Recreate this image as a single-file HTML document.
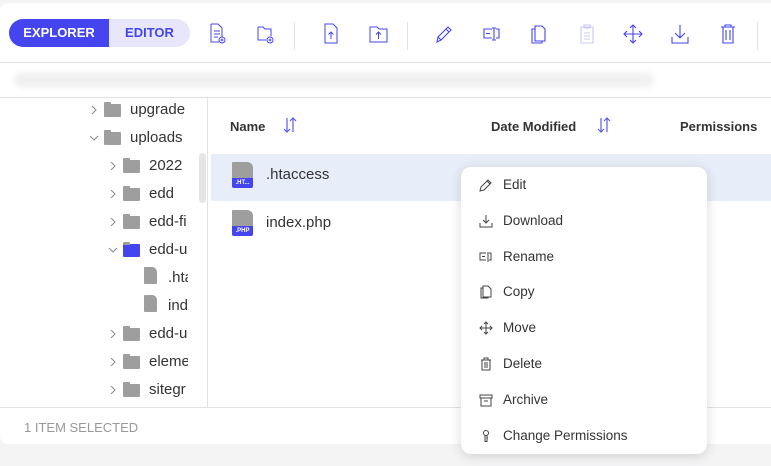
<!DOCTYPE html>
<html><head><style>
*{box-sizing:border-box;margin:0;padding:0}
body{width:771px;height:466px;background:#f4f4f5;font-family:"Liberation Sans",sans-serif;position:relative;overflow:hidden}
.card{position:absolute;left:0;top:3px;width:771px;height:441px;background:#fff;border-radius:8px 0 0 8px}
.tb{position:absolute;left:0;top:0;width:771px;height:60px;border-bottom:1px solid #e2e2e2}
.seg{position:absolute;left:9px;top:16px;width:181px;height:28px;border-radius:14px;background:#e8e6fb;overflow:hidden}
.seg .a{position:absolute;left:0;top:0;width:100px;height:28px;background:#4545ef;color:#fff;font-weight:bold;font-size:13px;line-height:28px;text-align:center}
.seg .b{position:absolute;left:100px;top:0;width:81px;height:28px;color:#4545ef;font-weight:bold;font-size:13px;line-height:28px;text-align:center}
.ic{position:absolute;top:20px}
.sep{position:absolute;top:19px;width:1px;height:28px;background:#e2e2e2}
.bc{position:absolute;left:0;top:61px;width:771px;height:34px;border-bottom:1px solid #e2e2e2}
.blur{position:absolute;left:14px;top:9px;width:640px;height:14px;background:#f0f0f0;border-radius:7px;filter:blur(3px)}
.tree{position:absolute;left:0;top:95px;width:208px;height:309px;border-right:1px solid #e2e2e2;overflow:hidden}
.row{position:absolute;font-size:15px;color:#333;height:20px;line-height:20px;white-space:nowrap}
.fold{position:absolute;width:17px;height:13px;background:#9e9e9e;border-radius:1px}
.fold:before{content:"";position:absolute;left:0;top:-2px;width:7px;height:3px;background:#9e9e9e;border-radius:1px 1px 0 0}
.chev{position:absolute;width:10px;height:10px}
.sb{position:absolute;left:199px;top:55px;width:7px;height:50px;background:#e4e4e4;border-radius:4px}
.hdr{position:absolute;top:116px;font-size:13px;font-weight:bold;color:#333}
.sel{position:absolute;left:211px;top:151px;width:560px;height:47px;background:#e8eef9}
.fname{position:absolute;font-size:15px;color:#333}
.status{position:absolute;left:0;top:404px;width:771px;height:37px;border-top:1px solid #e2e2e2;font-size:13px;color:#999;padding:12px 0 0 24px}
.menu{position:absolute;left:461px;top:167px;width:246px;height:287px;background:#fff;border-radius:10px;box-shadow:0 2px 12px rgba(0,0,0,.15)}
.mi{position:absolute;left:0;font-size:13.5px;color:#333;height:20px;line-height:20px}
.mi svg{position:absolute;left:18px;top:3px}
.mi span{position:absolute;left:42px;white-space:nowrap}
</style></head><body>
<svg width="0" height="0" style="position:absolute"><defs>
<symbol id="cr" viewBox="0 0 10 10"><path d="M3 1l4 4-4 4" fill="none" stroke="#888" stroke-width="1"/></symbol>
<symbol id="cd" viewBox="0 0 10 10"><path d="M1 3l4 4 4-4" fill="none" stroke="#888" stroke-width="1"/></symbol>
<symbol id="srt" viewBox="0 0 16 18"><path d="M5 2v14M2 13l3 3 3-3M11 16V2M8 5l3-3 3 3" fill="none" stroke="#5b5bf0" stroke-width="1.2"/></symbol>
</defs></svg>
<div class="card">
<div class="tb">
 <div class="seg"><div class="a">EXPLORER</div><div class="b">EDITOR</div></div>
 <svg class="ic" style="left:209px" width="18" height="22" viewBox="0 0 18 22" fill="none" stroke="#4545ef" stroke-width="1"><path d="M2 1h7l4 4v9M2 1v18h8"/><path d="M5 8h6M5 11h6M5 14h4"/><circle cx="13" cy="17" r="3"/><path d="M13 15.5v3M11.5 17h3"/></svg>
 <svg class="ic" style="left:256px" width="20" height="22" viewBox="0 0 20 22" fill="none" stroke="#4545ef" stroke-width="1"><path d="M2 4h5l2 2h6v7M2 4v13h8"/><circle cx="14" cy="17" r="3"/><path d="M14 15.5v3M12.5 17h3"/></svg>
 <div class="sep" style="left:294px"></div>
 <svg class="ic" style="left:323px" width="18" height="22" viewBox="0 0 18 22" fill="none" stroke="#4545ef" stroke-width="1"><path d="M2 1h8l4 4v15H2z"/><path d="M8 16v-7M5.5 11.5L8 9l2.5 2.5"/></svg>
 <svg class="ic" style="left:369px" width="20" height="22" viewBox="0 0 20 22" fill="none" stroke="#4545ef" stroke-width="1"><path d="M1 4h7l2 2h8v13H1z"/><path d="M9.5 16v-7M7 11.5L9.5 9l2.5 2.5"/></svg>
 <div class="sep" style="left:407px"></div>
 <svg class="ic" style="left:434px" width="20" height="22" viewBox="0 0 20 22" fill="none" stroke="#4545ef" stroke-width="1.1"><path d="M3 19l1-5L14 4l3 3L7 17z M12 6l3 3 M4 14l3 3"/></svg>
 <svg class="ic" style="left:481px" width="22" height="22" viewBox="0 0 22 22" fill="none" stroke="#4545ef" stroke-width="1.1"><path d="M11 6H3v9h8M15 6h3v9h-3M13 5v12M11 5h4M11 17h4M5 10.5h4"/></svg>
 <svg class="ic" style="left:530px" width="18" height="22" viewBox="0 0 18 22" fill="none" stroke="#4545ef" stroke-width="1.1"><path d="M5 3h7l3 3v12H5z"/><path d="M5 6H2v14h10v-2"/></svg>
 <svg class="ic" style="left:578px" width="18" height="22" viewBox="0 0 18 22" fill="none" stroke="#c8c8f6" stroke-width="1.1"><path d="M3 4h12v16H3zM6 2h6v3H6zM6 10h6M6 13h6M6 16h6"/></svg>
 <svg class="ic" style="left:622px" width="22" height="22" viewBox="0 0 22 22" fill="none" stroke="#4545ef" stroke-width="1.1"><path d="M11 2v18M2 11h18M8 5l3-3 3 3M8 17l3 3 3-3M5 8l-3 3 3 3M17 8l3 3-3 3"/></svg>
 <svg class="ic" style="left:670px" width="20" height="22" viewBox="0 0 20 22" fill="none" stroke="#4545ef" stroke-width="1.1"><path d="M10 2v13M5 10l5 5 5-5M2 14v6h16v-6"/></svg>
 <svg class="ic" style="left:719px" width="18" height="22" viewBox="0 0 18 22" fill="none" stroke="#4545ef" stroke-width="1.1"><path d="M2 4h14M6 4V2h6v2M4 4v16h10V4M7 7v10M11 7v10"/></svg>
 <div class="sep" style="left:757px"></div>
</div>
<div class="bc"><div class="blur"></div></div>
<div class="tree">
 <svg class="chev" style="left:89px;top:7px"><use href="#cr"/></svg><div class="fold" style="left:104px;top:6px"></div><div class="row" style="left:130px;top:2px">upgrade</div>
 <svg class="chev" style="left:89px;top:35px"><use href="#cd"/></svg><div class="fold" style="left:104px;top:34px"></div><div class="row" style="left:130px;top:30px">uploads</div>
 <svg class="chev" style="left:108px;top:63px"><use href="#cr"/></svg><div class="fold" style="left:123px;top:62px"></div><div class="row" style="left:149px;top:58px">2022</div>
 <svg class="chev" style="left:108px;top:91px"><use href="#cr"/></svg><div class="fold" style="left:123px;top:90px"></div><div class="row" style="left:149px;top:86px">edd</div>
 <svg class="chev" style="left:108px;top:119px"><use href="#cr"/></svg><div class="fold" style="left:123px;top:118px"></div><div class="row" style="left:149px;top:114px">edd-fi</div>
 <svg class="chev" style="left:108px;top:147px"><use href="#cd"/></svg><div class="fold" style="left:123px;top:146px;background:#4545ef"></div><div class="row" style="left:149px;top:142px">edd-u</div>
 <div style="position:absolute;left:144px;top:169px;width:13px;height:17px;background:#9e9e9e;border-radius:1px 5px 1px 1px"></div><div class="row" style="left:168px;top:170px">.hta</div>
 <div style="position:absolute;left:144px;top:197px;width:13px;height:17px;background:#9e9e9e;border-radius:1px 5px 1px 1px"></div><div class="row" style="left:168px;top:198px">ind</div>
 <svg class="chev" style="left:108px;top:231px"><use href="#cr"/></svg><div class="fold" style="left:123px;top:230px"></div><div class="row" style="left:149px;top:226px">edd-u</div>
 <svg class="chev" style="left:108px;top:259px"><use href="#cr"/></svg><div class="fold" style="left:123px;top:258px"></div><div class="row" style="left:149px;top:254px">eleme</div>
 <svg class="chev" style="left:108px;top:287px"><use href="#cr"/></svg><div class="fold" style="left:123px;top:286px"></div><div class="row" style="left:149px;top:282px">sitegr</div>
 <div style="position:absolute;left:188px;top:0;width:20px;height:309px;background:#fff"></div>
 <div class="sb"></div>
</div>
<div class="hdr" style="left:230px">Name</div>
<div class="hdr" style="left:491px">Date Modified</div>
<div class="hdr" style="left:680px">Permissions</div>
<svg style="position:absolute;left:282px;top:113px" width="16" height="18"><use href="#srt"/></svg>
<svg style="position:absolute;left:596px;top:113px" width="16" height="18"><use href="#srt"/></svg>
<div class="sel"></div>
<div style="position:absolute;left:232px;top:159px;width:21px;height:26px;background:#9e9e9e;border-radius:1px 6px 2px 2px"><div style="position:absolute;left:0;bottom:0;width:21px;height:10px;background:#4545ef;border-radius:0 0 2px 2px;color:#fff;font-size:6px;line-height:10px;text-align:center;font-weight:bold">.HT...</div></div>
<div class="fname" style="left:266px;top:163px">.htaccess</div>
<div style="position:absolute;left:232px;top:207px;width:21px;height:26px;background:#9e9e9e;border-radius:1px 6px 2px 2px"><div style="position:absolute;left:0;bottom:0;width:21px;height:10px;background:#4545ef;border-radius:0 0 2px 2px;color:#fff;font-size:6px;line-height:10px;text-align:center;font-weight:bold">.PHP</div></div>
<div class="fname" style="left:266px;top:211px">index.php</div>
<div class="status">1 ITEM SELECTED</div>
</div>
<div class="menu">
 <div class="mi" style="top:8px"><svg width="14" height="14" viewBox="0 0 14 14" fill="none" stroke="#444" stroke-width="1"><path d="M1 13l1-4 7-7 3 3-7 7zM8 3l3 3"/></svg><span>Edit</span></div>
 <div class="mi" style="top:44px"><svg width="14" height="14" viewBox="0 0 14 14" fill="none" stroke="#444" stroke-width="1"><path d="M7 1v8M4 6l3 3 3-3M1 9v4h12V9"/></svg><span>Download</span></div>
 <div class="mi" style="top:80px"><svg width="14" height="14" viewBox="0 0 14 14" fill="none" stroke="#444" stroke-width="1"><path d="M7 3H1v7h6M10 3h2v7h-2M9 2v10M3 6.5h3"/></svg><span>Rename</span></div>
 <div class="mi" style="top:115px"><svg width="14" height="14" viewBox="0 0 14 14" fill="none" stroke="#444" stroke-width="1"><path d="M4 1h5l3 3v8H4zM4 3H2v10h7v-1"/></svg><span>Copy</span></div>
 <div class="mi" style="top:151px"><svg width="14" height="14" viewBox="0 0 14 14" fill="none" stroke="#444" stroke-width="1"><path d="M7 1v12M1 7h12M5 3l2-2 2 2M5 11l2 2 2-2M3 5L1 7l2 2M11 5l2 2-2 2"/></svg><span>Move</span></div>
 <div class="mi" style="top:187px"><svg width="14" height="14" viewBox="0 0 14 14" fill="none" stroke="#444" stroke-width="1"><path d="M2 3h10M5 3V1h4v2M3 3v10h8V3M6 5v6M8 5v6"/></svg><span>Delete</span></div>
 <div class="mi" style="top:223px"><svg width="14" height="14" viewBox="0 0 14 14" fill="none" stroke="#444" stroke-width="1"><path d="M1 2h12v3H1zM2 5v8h10V5M5 8h4"/></svg><span>Archive</span></div>
 <div class="mi" style="top:259px"><svg width="14" height="14" viewBox="0 0 14 14" fill="none" stroke="#444" stroke-width="1"><circle cx="7" cy="4" r="2.5"/><path d="M6 6.5v6h2v-6M8 9h1"/></svg><span>Change Permissions</span></div>
</div>
</body></html>
